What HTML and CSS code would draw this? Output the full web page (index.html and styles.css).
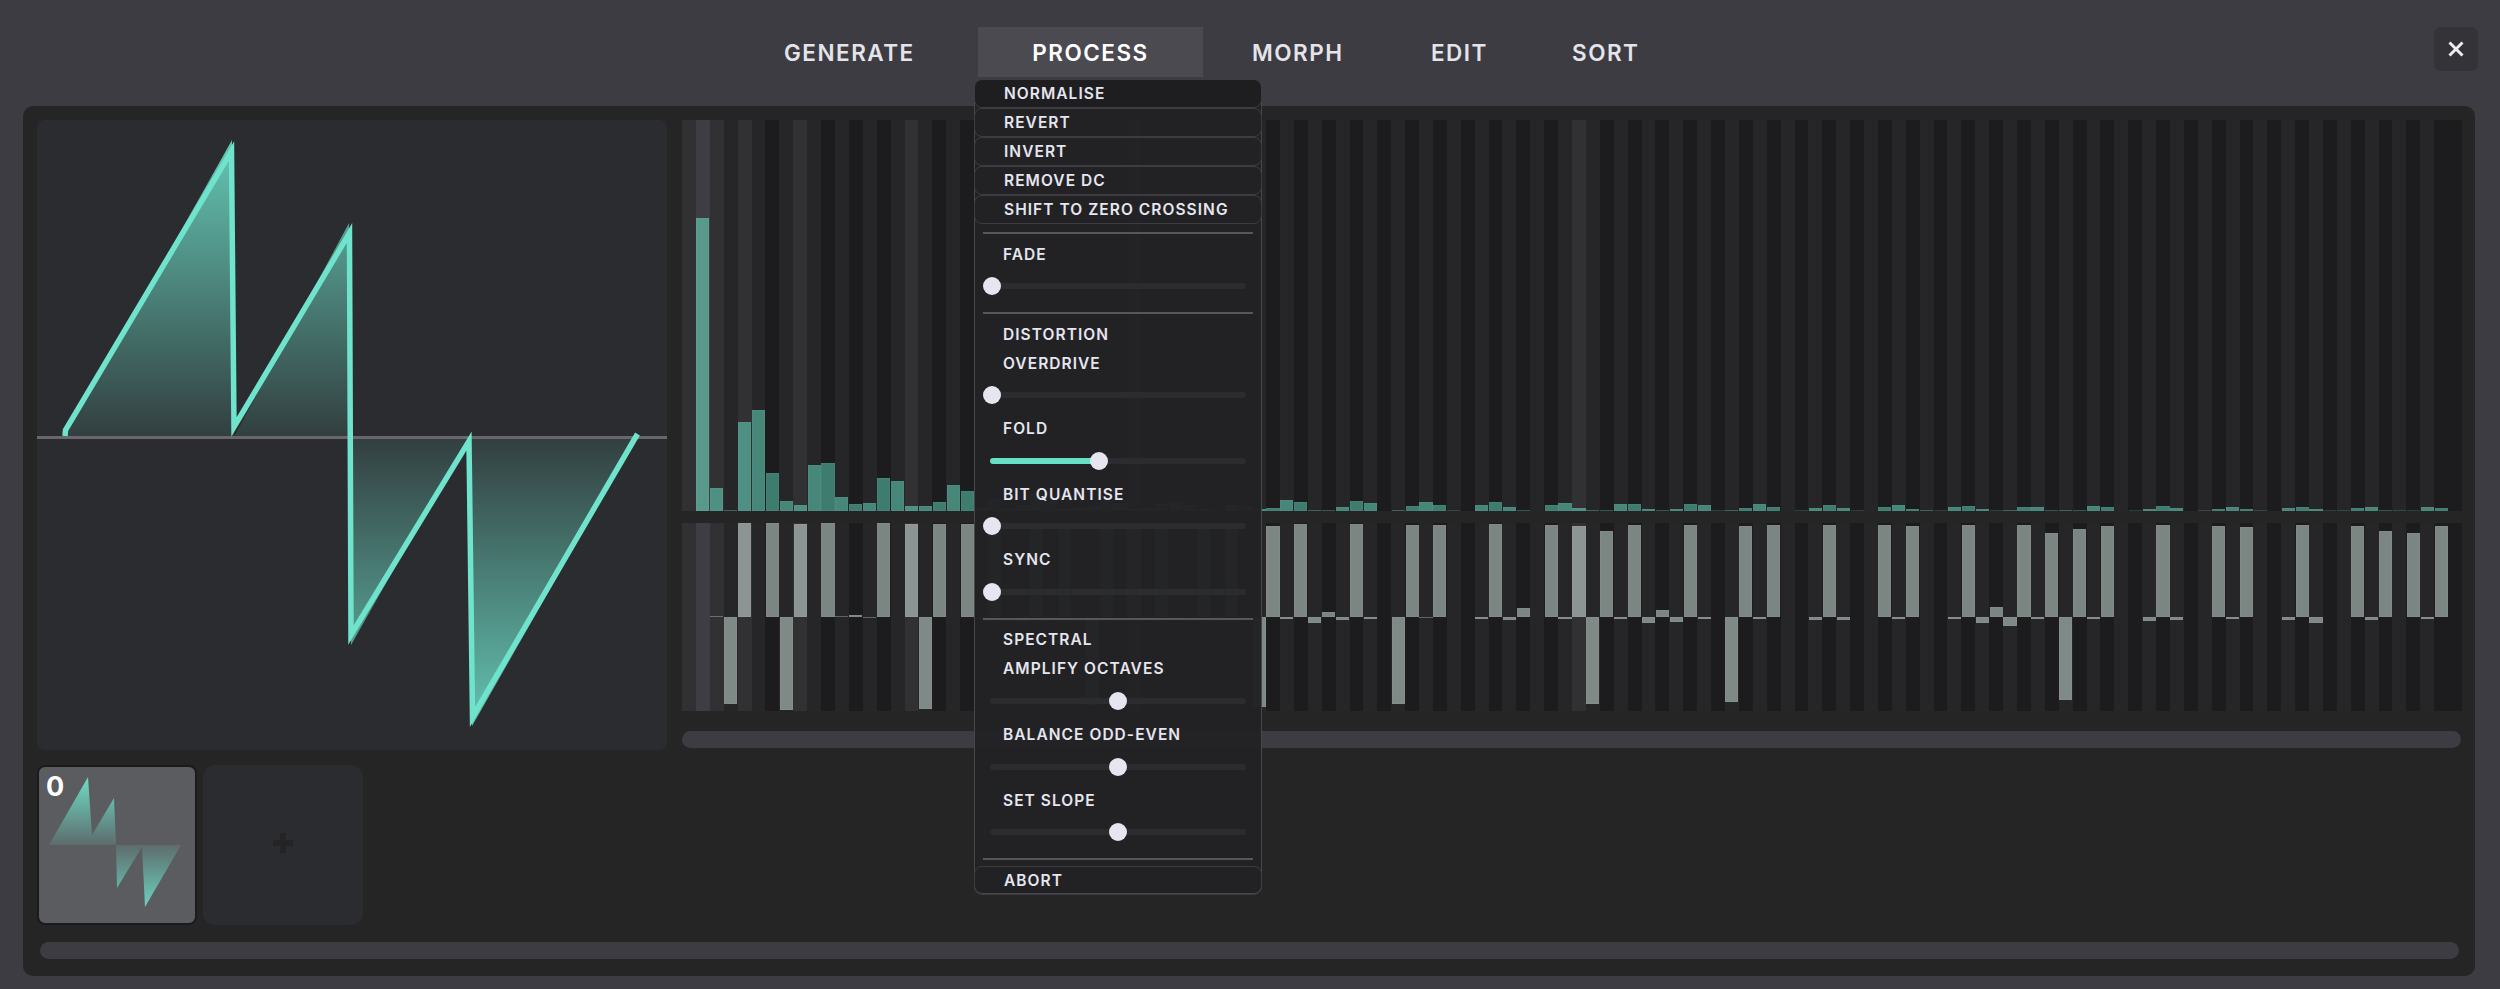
FILE: index.html
```html
<!DOCTYPE html>
<html lang="en">
<head>
<meta charset="utf-8">
<title>Wavetable editor</title>
<link rel="stylesheet" href="styles.css">
</head>
<body>
<header class="topbar">
  <nav class="tabs">
    <div class="tab tab-generate">GENERATE</div>
    <div class="tab tab-process">PROCESS
      <div class="menu">
        <div class="action action-hover">NORMALISE</div>
        <div class="action">REVERT</div>
        <div class="action">INVERT</div>
        <div class="action">REMOVE DC</div>
        <div class="action">SHIFT TO ZERO CROSSING</div>
        <hr class="divider divider-first">
        <div class="label">FADE</div>
        <div class="slider"><div class="track"><div class="thumb thumb-0"></div></div></div>
        <hr class="divider">
        <div class="label">DISTORTION</div>
        <div class="label">OVERDRIVE</div>
        <div class="slider"><div class="track"><div class="thumb thumb-0"></div></div></div>
        <div class="label">FOLD</div>
        <div class="slider"><div class="track"><div class="fill"></div><div class="thumb thumb-fold"></div></div></div>
        <div class="label">BIT QUANTISE</div>
        <div class="slider"><div class="track"><div class="thumb thumb-0"></div></div></div>
        <div class="label">SYNC</div>
        <div class="slider"><div class="track"><div class="thumb thumb-0"></div></div></div>
        <hr class="divider">
        <div class="label">SPECTRAL</div>
        <div class="label">AMPLIFY OCTAVES</div>
        <div class="slider"><div class="track"><div class="thumb thumb-mid"></div></div></div>
        <div class="label">BALANCE ODD-EVEN</div>
        <div class="slider"><div class="track"><div class="thumb thumb-mid"></div></div></div>
        <div class="label">SET SLOPE</div>
        <div class="slider"><div class="track"><div class="thumb thumb-mid"></div></div></div>
        <hr class="divider">
        <div class="action action-abort">ABORT</div>
      </div>
    </div>
    <div class="tab tab-morph">MORPH</div>
    <div class="tab tab-edit">EDIT</div>
    <div class="tab tab-sort">SORT</div>
  </nav>
  <button class="close" aria-label="Close">
    <svg width="16" height="16" viewBox="0 0 16 16"><path d="M1.500 1.500 14.500 14.500M14.500 1.500 1.500 14.500" stroke="#ececf2" stroke-width="3" fill="none"/></svg>
  </button>
</header>

<main class="panel">
  <section class="editor">
    <div class="wave">
      <svg width="630" height="630" viewBox="0 0 630 630">
        <defs>
          <linearGradient id="waveFill" gradientUnits="userSpaceOnUse" x1="0" y1="317" x2="0" y2="20" spreadMethod="reflect">
            <stop offset="0" stop-color="#6fe3cc" stop-opacity=".1"/>
            <stop offset="1" stop-color="#6fe3cc" stop-opacity=".85"/>
          </linearGradient>
        </defs>
        <path d="M28 317 195 20 197 317 312 103 314 525 432 317 435 606 600 317Z" fill="url(#waveFill)"/>
        <rect x="0" y="316" width="630" height="3" fill="#68686c"/>
        <path d="M28 316 28.500 310 194.500 31 197 307 312.500 113 314 515 432 321 435.500 597 600.500 314" fill="none" stroke="#6fe3cc" stroke-width="5.500" stroke-miterlimit="20"/>
      </svg>
    </div>
    <div class="spectrum">
      <div class="magnitudes" id="magnitudes"></div>
      <div class="phases" id="phases"></div>
      <div class="scrollbar scrollbar-spectrum"></div>
    </div>
  </section>
  <section class="frames">
    <div class="frame frame-selected">
      <span class="frame-index">0</span>
      <svg width="156" height="156" viewBox="2 2 156 156">
        <defs>
          <linearGradient id="thumbFill" gradientUnits="userSpaceOnUse" x1="0" y1="80" x2="0" y2="12" spreadMethod="reflect">
            <stop offset="0" stop-color="#6fe3cc" stop-opacity=".12"/>
            <stop offset="1" stop-color="#6fe3cc" stop-opacity=".95"/>
          </linearGradient>
        </defs>
        <path d="M12 80 51 12 55 70 77 33 79 80 80 123 105 82 108 142 144 80Z" fill="url(#thumbFill)"/>
      </svg>
    </div>
    <div class="frame frame-add"><span class="plus"></span></div>
  </section>
  <div class="scrollbar scrollbar-frames"></div>
</main>
<script src="spectrum.js"></script>
</body>
</html>
```
FILE: styles.css
```css
* { box-sizing: border-box; }
html, body { margin: 0; height: 100%; }
body {
  background: #3c3c42;
  font-family: Inter, "Liberation Sans", sans-serif;
  color: #e6e6f0;
  overflow: hidden;
}
.topbar { height: 106px; padding-top: 27px; display: flex; position: relative; }
.tabs { display: flex; height: 50px; padding-left: 742px; }
.tab {
  flex: none;
  height: 50px;
  line-height: 51px;
  font-size: 22.500px;
  font-weight: 600;
  letter-spacing: 1.500px;
  color: #e4e4ea;
  position: relative;
  white-space: nowrap;
}
.tab-generate { width: 236px; padding-left: 42px; }
.tab-process { width: 225px; background: #4a4a50; color: #fff; text-align: center; }
.tab-morph { width: 184px; padding-left: 49px; }
.tab-edit { width: 143px; padding-left: 44px; }
.tab-sort { padding-left: 42px; }
.close {
  position: absolute;
  left: 2434px;
  top: 27px;
  width: 44px;
  height: 44px;
  border: 0;
  border-radius: 7px;
  background: #333338;
  display: flex;
  align-items: center;
  justify-content: center;
  padding: 0;
}
.menu {
  position: absolute;
  top: 52px;
  left: -4px;
  width: 288px;
  height: 815px;
  background: rgba(35, 35, 37, .98);
  border: 1px solid #46464c;
  border-radius: 8px;
  z-index: 5;
  text-align: left;
}
.action, .label {
  height: 29px;
  line-height: 29px;
  padding-left: 28px;
  font-size: 15.500px;
  font-weight: 600;
  letter-spacing: 1.050px;
  color: #e6e6f0;
}
.action {
  margin: 0 -1px;
  border: 1px solid #3c3c42;
  border-radius: 8px;
  padding-left: 29px;
  line-height: 28px;
}
.action-hover { background: #1e1e20; margin-top: -1px; }
.action-abort { margin-top: 5px; }
.divider { height: 2px; border: 0; margin: 7px 8px 5.500px; background: #57575b; }
.divider-first { margin-top: 8px; }
.slider { height: 36.600px; padding: 14.500px 15px 0; }
.track { height: 6px; background: #2b2c30; border-radius: 3px; position: relative; }
.fill { width: 110px; height: 6px; background: #66e0c4; border-radius: 3px; }
.thumb {
  position: absolute;
  top: -6px;
  width: 18px;
  height: 18px;
  border-radius: 50%;
  background: #e6e6f0;
}
.thumb-0 { left: -7px; }
.thumb-fold { left: 100px; }
.thumb-mid { left: 119px; }

.panel {
  margin: 0 25px 0 23px;
  height: 870px;
  background: #252525;
  border-radius: 10px;
  padding: 14px 14px 0;
}
.editor { display: flex; gap: 15px; height: 630px; }
.wave { width: 630px; height: 630px; background: #2b2c30; border-radius: 7px; overflow: hidden; flex: none; }
.wave svg { display: block; }
.spectrum { width: 1779px; flex: none; }
.magnitudes { height: 391px; display: flex; }
.phases { height: 188px; margin-top: 12px; display: flex; }
.col { flex: 1 1 0; display: flex; flex-direction: column; min-width: 0; }
.magnitudes .col { justify-content: flex-end; }
.half { height: 94px; display: flex; flex-direction: column; }
.half-up { justify-content: flex-end; }
.bar { display: block; margin: 0 .4px; box-shadow: inset 0 0 0 1px rgba(255, 255, 255, .04); flex: none; }
.scrollbar { background: #3c3c42; border-radius: 9px; }
.scrollbar-spectrum { height: 17px; margin-top: 20px; }
.frames { display: flex; gap: 6px; margin-top: 15px; }
.frame { width: 160px; height: 160px; flex: none; position: relative; }
.frame-selected { background: #5b5c60; border: 2px solid #1b1b1f; border-radius: 8px; }
.frame-selected svg { display: block; }
.frame-index { position: absolute; left: 7px; top: 5px; font-size: 27px; line-height: 30px; font-weight: 700; color: #fff; z-index: 1; }
.frame-add { background: #2b2c30; border-radius: 12px; display: flex; align-items: center; justify-content: center; }
.plus {
  width: 20px;
  height: 20px;
  margin-top: -4px;
  background:
    linear-gradient(#242426, #242426) center / 20px 6px no-repeat,
    linear-gradient(#242426, #242426) center / 6px 20px no-repeat;
}
.scrollbar-frames { height: 17px; margin: 17px 2px 0 3px; }
```
FILE: spectrum.js
```js
var mags = [0,293,23,1,89,101,38,10,6,46,48,14,7,8,33,30,5,5,9,26,20,
  4,12,3,6,18,14,2,3,5,10,8,2,3,7,9,6,2,1,6,5,
  2,3,11,9,1,1,4,10,8,0,1,5,9,6,.5,0,6,9,4,1,0,6,8,3,1,1,7,7,2,1,2,7,6,.5,1,3,7,4,0,.5,3,6,3,.5,0,
  4,6,2,1,.5,4,5,2,.5,1,4,4,1,1,1,5,4,0,.5,2,5,3,0,.3,2,4,2,.5,0,3,4,2,.5,.5,3,4,1,.5,.5,4,3,0];
var phases = [0,0,1,-87,94,0,94,-93,93,0,94,1,2,-1,94,0,93,-92,93,0,93,
  -2,92,0,-5,92,-2,93,0,-88,92,0,91,-3,92,-2,0,91,-4,92,-2,
  -90,91,-2,93,-6,5,-3,93,-2,0,-87,92,-1,92,0,0,-2,93,-3,9,0,92,-2,91,-87,86,-2,92,-6,7,-5,92,-2,0,-85,91,-2,92,0,0,-3,92,-3,0,0,
  92,-2,91,0,0,-2,92,-6,10,-9,92,-2,84,-83,88,-2,91,0,0,-4,92,-3,0,0,91,-2,90,0,0,-3,92,-6,0,0,91,-2.500,86,0,84,-2,91,0];

function isPowerOfTwo(i) { return i === 4 || i === 8 || i === 16 || i === 32 || i === 64; }
function tone(i) {
  if (i === 1) return 3;
  if (i === 0 || i === 2 || isPowerOfTwo(i)) return 2;
  return i % 2 === 1 && i !== 127 ? 1 : 0;
}
var backgrounds = ['#1c1c1e', '#262629', '#313133', '#3d3d43'];
var teal = ['#3f7c70', '#47877a', '#4e9083', '#59998c'];
var grey = ['#7b8683', '#7f8a87', '#8c9593', '#8c9593'];

function bar(height, color) {
  var el = document.createElement('i');
  el.className = 'bar';
  el.style.height = Math.max(height, 1) + 'px';
  el.style.background = color;
  if (height <= 1) el.style.opacity = height <= .5 ? .35 : .6;
  return el;
}
function half(side) {
  var el = document.createElement('div');
  el.className = 'half half-' + side;
  return el;
}
var magHost = document.getElementById('magnitudes');
var phaseHost = document.getElementById('phases');
for (var i = 0; i < 128; i++) {
  var t = tone(i);
  var magCol = document.createElement('div');
  magCol.className = 'col';
  magCol.style.background = backgrounds[t];
  if (mags[i] > 0) magCol.appendChild(bar(mags[i], teal[t]));
  magHost.appendChild(magCol);

  var phaseCol = document.createElement('div');
  phaseCol.className = 'col';
  phaseCol.style.background = backgrounds[t];
  var up = half('up');
  var down = half('down');
  if (phases[i] > 0) up.appendChild(bar(phases[i], grey[t]));
  if (phases[i] < 0) down.appendChild(bar(-phases[i], grey[t]));
  phaseCol.appendChild(up);
  phaseCol.appendChild(down);
  phaseHost.appendChild(phaseCol);
}
```
